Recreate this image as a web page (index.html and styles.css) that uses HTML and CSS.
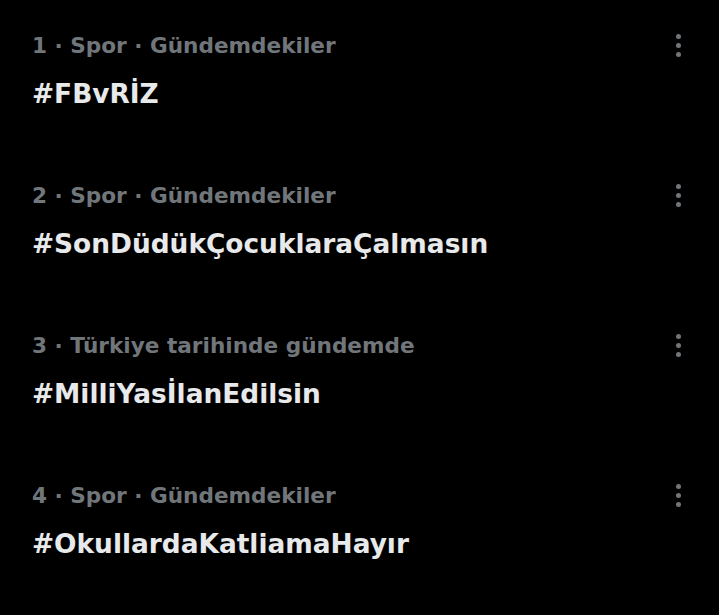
FILE: index.html
```html
<!DOCTYPE html>
<html lang="tr">
<head>
    <meta charset="UTF-8">
    <title>Gündem</title>
    <link rel="stylesheet" href="styles.css">
</head>
<body>

    <div class="trends">
        <div class="trend">
            <div class="trend-text">
                <p class="meta">1 · Spor · Gündemdekiler</p>
                <p class="tag">#FBvRİZ</p>
            </div>
            <div class="more"><span></span><span></span><span></span></div>
        </div>
        <div class="trend">
            <div class="trend-text">
                <p class="meta">2 · Spor · Gündemdekiler</p>
                <p class="tag">#SonDüdükÇocuklaraÇalmasın</p>
            </div>
            <div class="more"><span></span><span></span><span></span></div>
        </div>
        <div class="trend">
            <div class="trend-text">
                <p class="meta">3 · Türkiye tarihinde gündemde</p>
                <p class="tag">#MilliYasİlanEdilsin</p>
            </div>
            <div class="more"><span></span><span></span><span></span></div>
        </div>
        <div class="trend">
            <div class="trend-text">
                <p class="meta">4 · Spor · Gündemdekiler</p>
                <p class="tag">#OkullardaKatliamaHayır</p>
            </div>
            <div class="more"><span></span><span></span><span></span></div>
        </div>
    </div>

</body>
</html>
```

FILE: styles.css
```css
body {
    margin: 0;
    background-color: #000000;
    font-family: 'DejaVu Sans', 'Liberation Sans', sans-serif;
    height: 615px;
    overflow: hidden;
}

.trends {
    padding: 31px 0 0 32px;
}

.trend {
    display: flex;
    justify-content: space-between;
    height: 150px;
}

.trend p {
    margin: 0;
}

.meta {
    color: #71767b;
    font-size: 21.6px;
    font-weight: 700;
    line-height: 30px;
}

.tag {
    color: #e7e9ea;
    font-size: 26.4px;
    font-weight: 700;
    line-height: 36px;
    margin-top: 15px !important;
}

.more {
    display: flex;
    flex-direction: column;
    gap: 4px;
    width: 82px;
    align-items: center;
    padding-top: 3px;
}

.more span {
    width: 5px;
    height: 5px;
    border-radius: 50%;
    background-color: #71767b;
}
```
